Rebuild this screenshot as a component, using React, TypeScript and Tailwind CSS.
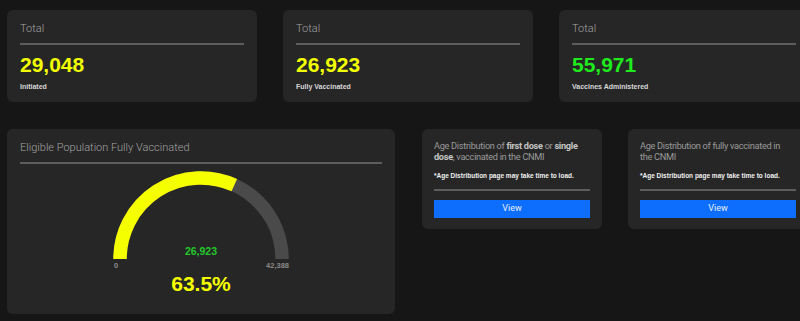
import React from 'react';

const totals = [
  { value: '29,048', label: 'Initiated', color: 'text-[#f2ff00]' },
  { value: '26,923', label: 'Fully Vaccinated', color: 'text-[#f2ff00]' },
  { value: '55,971', label: 'Vaccines Administered', color: 'text-[#1eea1e]' },
];

const Gauge: React.FC = () => {
  // 63.5% of a half circle
  const cx = 181;
  const cy = 95;
  const r = 81;
  const pct = 0.635;
  const a = Math.PI * (1 - pct);
  const ex = cx + r * Math.cos(a);
  const ey = cy - r * Math.sin(a);
  return (
    <svg width="362" height="110" className="block">
      <path d={`M ${cx - r} ${cy} A ${r} ${r} 0 0 1 ${cx + r} ${cy}`} fill="none" stroke="#4a4a4a" strokeWidth="13.5" />
      <path d={`M ${cx - r} ${cy} A ${r} ${r} 0 0 1 ${ex} ${ey}`} fill="none" stroke="#f5ff00" strokeWidth="13.5" />
      <text x={cx} y={cy - 4} textAnchor="middle" fill="#22c92a" fontFamily="Liberation Sans, Arial, sans-serif" fontWeight="700" fontSize="10.5">
        26,923
      </text>
      <text x={cx - r - 6} y={cy + 9} fill="#8a8a8a" fontFamily="Liberation Sans, Arial, sans-serif" fontWeight="700" fontSize="7.5">
        0
      </text>
      <text x={cx + r + 7} y={cy + 9} textAnchor="end" fill="#8a8a8a" fontFamily="Liberation Sans, Arial, sans-serif" fontWeight="700" fontSize="7.5">
        42,388
      </text>
    </svg>
  );
};

const AgeCard: React.FC<{ children: React.ReactNode }> = ({ children }) => (
  <div className="w-[180px] h-[100px] shrink-0 rounded-md bg-[#262626] px-3 pt-[11px]">
    <p className="text-[9.2px] leading-[11px] tracking-[-0.3px] text-[#9a9a9a] font-['Roboto',sans-serif]">{children}</p>
    <p className="mt-[10px] text-[6.5px] leading-[8px] font-bold text-[#f0f0f0] font-['Liberation_Sans',Arial,sans-serif]">
      *Age Distribution page may take time to load.
    </p>
    <div className="mt-[9px] h-[2px] bg-[#5c5c5c]" />
    <button className="mt-[9px] w-full h-[18px] bg-[#0d6efd] text-[9px] text-[#e6eeff] font-['Roboto',sans-serif]">View</button>
  </div>
);

export default function App() {
  return (
    <div className="w-[800px] h-[321px] overflow-hidden bg-[#161616] pl-[7px] pt-[10px] font-['Roboto',sans-serif]">
      {/* totals */}
      <div className="flex gap-[26px]">
        {totals.map((t) => (
          <div key={t.label} className="w-[250px] h-[92px] shrink-0 rounded-md bg-[#262626] px-[13px] pt-[11px]">
            <div className="text-[11px] leading-4 font-light text-[#a3a3a3]">Total</div>
            <div className="mt-[6px] h-[2px] bg-[#5c5c5c]" />
            <div className={`mt-[8px] text-[21px] leading-6 font-bold font-['Liberation_Sans',Arial,sans-serif] ${t.color}`}>{t.value}</div>
            <div className="mt-[5px] text-[7px] leading-[10px] font-bold text-[#d8d8d8] font-['Liberation_Sans',Arial,sans-serif]">{t.label}</div>
          </div>
        ))}
      </div>

      {/* second row */}
      <div className="mt-[27px] flex items-start gap-[27px]">
        <div className="w-[388px] h-[185px] shrink-0 rounded-md bg-[#262626] px-[13px] pt-[11px]">
          <div className="text-[11px] leading-4 font-light text-[#a3a3a3]">Eligible Population Fully Vaccinated</div>
          <div className="mt-[6px] h-[2px] bg-[#5c5c5c]" />
          <Gauge />
          <div className="-mt-[2px] text-center text-[21px] leading-6 font-bold text-[#f5ff00] font-['Liberation_Sans',Arial,sans-serif]">63.5%</div>
        </div>
        <AgeCard>
          Age Distribution of <span className="font-bold text-[#c4c4c4]">first dose</span> or{' '}
          <span className="font-bold text-[#c4c4c4]">single dose</span>, vaccinated in the CNMI
        </AgeCard>
        <div className="-ml-px">
          <AgeCard>
            Age Distribution of fully vaccinated in
            <br />
            the CNMI
          </AgeCard>
        </div>
      </div>
    </div>
  );
}
